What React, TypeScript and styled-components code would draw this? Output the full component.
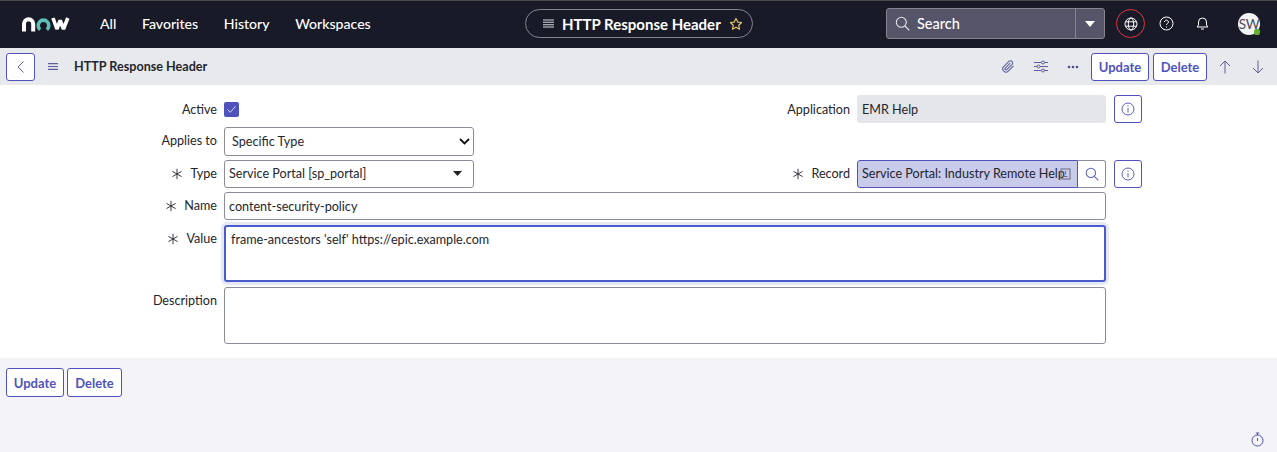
import React from "react";
import styled, { createGlobalStyle } from "styled-components";

const Global = createGlobalStyle`
  html, body { margin: 0; padding: 0; background: #f4f4f8; }
  * { box-sizing: border-box; }
  body { font-family: Lato, "Liberation Sans", sans-serif; color: #24262e; }
`;

const Page = styled.div`
  width: 1277px;
  height: 452px;
  overflow: hidden;
  display: flex;
  flex-direction: column;
  position: relative;
`;

const TopBar = styled.header`
  height: 48px;
  background: #191a28;
  border-top: 1px solid #4a4a4c;
  display: flex;
  align-items: center;
  color: #fff;
  flex: none;
`;
const LogoSlot = styled.div`
  width: 100px;
  padding-left: 22px;
  display: flex;
  align-items: center;
  margin-top: -1px;
`;
const NavMenu = styled.nav`
  display: flex;
  gap: 25.6px;
  font-size: 14.1px;
  width: 425px;
  margin-top: -2px;
`;
const NavItem = styled.span`
  color: #fff;
  font-weight: 500;
`;
const Pill = styled.div`
  width: 228px;
  height: 29px;
  border: 1px solid #85858f;
  border-radius: 15px;
  display: flex;
  align-items: center;
  padding-left: 17px;
  gap: 8px;
  font-weight: 700;
  font-size: 15px;
  margin-top: -2px;
`;
const SearchBox = styled.div`
  margin-left: 133px;
  width: 219px;
  height: 31px;
  background: #555469;
  border: 1px solid #85858f;
  border-radius: 3px;
  display: flex;
  align-items: center;
  margin-top: -2px;
`;
const SearchMain = styled.div`
  flex: 1;
  display: flex;
  align-items: center;
  padding-left: 8px;
  gap: 7px;
  font-size: 14.5px;
  font-weight: 500;
  margin-top: -1px;
`;
const SearchCaret = styled.div`
  width: 29px;
  height: 100%;
  border-left: 1px solid #85858f;
  display: flex;
  align-items: center;
  justify-content: center;
`;
const Caret = styled.span`
  width: 0;
  height: 0;
  border-left: 5px solid transparent;
  border-right: 5px solid transparent;
  border-top: 6px solid #fff;
`;
const GlobeRing = styled.div`
  margin-left: 11px;
  width: 29px;
  height: 29px;
  border: 1px solid #e5323c;
  border-radius: 50%;
  display: flex;
  align-items: center;
  justify-content: center;
  margin-top: -2px;
`;
const HeadIcon = styled.div`
  margin-left: ${(p: { $ml: number }) => p.$ml}px;
  display: flex;
  align-items: center;
  margin-top: -2px;
`;
const Avatar = styled.div`
  margin-left: 28px;
  margin-top: -2px;
  width: 22px;
  height: 22px;
  border-radius: 50%;
  background: #f4f4f6;
  color: #4a4b57;
  font-size: 13.5px;
  letter-spacing: -0.5px;
  display: flex;
  align-items: center;
  justify-content: center;
  position: relative;
`;
const Presence = styled.span`
  position: absolute;
  right: 0;
  bottom: 0;
  width: 6px;
  height: 6px;
  border-radius: 2px;
  background: #62b22f;
`;

const Toolbar = styled.div`
  height: 37px;
  background: #e7e9ed;
  display: flex;
  align-items: center;
  padding: 0 6px;
  flex: none;
`;
const OutlineBtn = styled.button`
  height: 28px;
  padding: 0 7px;
  width: ${(p: { $w: number }) => p.$w}px;
  background: #fff;
  border: 1px solid #4f52bd;
  border-radius: 3px;
  color: #4f52bd;
  font: 700 13px Lato, sans-serif;
  display: flex;
  align-items: center;
  justify-content: center;
  flex: none;
`;
const ToolBtn = styled(OutlineBtn)`
  margin-left: ${(p: { $w: number; $ml?: number }) => p.$ml ?? 0}px;
`;
const FootBtn = styled(OutlineBtn)`
  height: 29px;
`;
const ToolIcon = styled.span`
  display: flex;
  align-items: center;
  margin-left: ${(p: { $ml: number }) => p.$ml}px;
  color: #5d5f9c;
`;
const ToolTitle = styled.div`
  margin-left: 16px;
  font-size: 12.6px;
  font-weight: 700;
  color: #24262e;
  margin-top: -1px;
`;
const Spacer = styled.div`
  flex: 1;
`;

const Form = styled.main`
  background: #fff;
  height: 273px;
  padding-top: 10px;
  display: flex;
  flex-direction: column;
  gap: 4px;
  flex: none;
`;
const Row = styled.div`
  display: flex;
  height: ${(p: { $h?: number; $mt?: number }) => p.$h ?? 28.3}px;
  margin-top: ${(p) => p.$mt ?? 0}px;
  flex: none;
`;
const Label = styled.label`
  width: ${(p: { $w: number; $top?: number }) => p.$w}px;
  flex: none;
  display: flex;
  justify-content: flex-end;
  align-items: flex-start;
  gap: 7px;
  padding-top: ${(p) => p.$top ?? 6}px;
  font-size: 12.6px;
  line-height: 16px;
  color: #24262e;
`;
const Star = styled.span`
  display: flex;
  align-items: center;
  height: 16px;
`;
const FieldGap = styled.div`
  width: 7px;
  flex: none;
`;
const CheckCell = styled.div`
  width: 250px;
  flex: none;
  display: flex;
  align-items: center;
`;
const CheckBox = styled.span`
  width: 15px;
  height: 15px;
  background: #4f52bd;
  border-radius: 2px;
  display: flex;
  align-items: center;
  justify-content: center;
`;
const SelectBox = styled.div`
  width: 250px;
  height: 100%;
  flex: none;
  border: 1px solid #8a8c99;
  border-radius: 3px;
  background: #fff;
  display: flex;
  align-items: center;
  justify-content: space-between;
  padding: 0 ${(p: { $pl: number; $pr: number }) => p.$pr}px 0 ${(p) => p.$pl}px;
  font-size: 12.6px;
`;
const ReadOnly = styled.div`
  width: 249px;
  height: 100%;
  flex: none;
  background: #e5e6ea;
  border-radius: 3px;
  display: flex;
  align-items: center;
  padding-left: 5px;
  font-size: 12.6px;
`;
const InfoBtn = styled(OutlineBtn)`
  margin-left: 8px;
  padding: 0;
  height: 100%;
`;
const Reference = styled.div`
  width: 221px;
  height: 100%;
  flex: none;
  background: #c9cbea;
  border: 1px solid #4f52bd;
  border-radius: 3px 0 0 3px;
  display: flex;
  align-items: center;
  padding-left: 4px;
  font-size: 12.6px;
  white-space: nowrap;
  position: relative;
`;
const RefIcon = styled.span`
  position: absolute;
  left: 202px;
  top: 7px;
  display: flex;
`;
const LookupBtn = styled.div`
  width: 28px;
  height: 100%;
  flex: none;
  background: #fff;
  border: 1px solid #8a8c99;
  border-left: none;
  border-radius: 0 3px 3px 0;
  display: flex;
  align-items: center;
  justify-content: center;
`;
const TextInput = styled.div`
  width: 882px;
  height: 100%;
  flex: none;
  border: 1px solid #8a8c99;
  border-radius: 3px;
  background: #fff;
  display: flex;
  align-items: center;
  padding-left: 4px;
  font-size: 12.6px;
`;
const TextArea = styled.div`
  width: 882px;
  height: 100%;
  flex: none;
  border: ${(p: { $focus?: boolean }) => (p.$focus ? "2px solid #4a5bd0" : "1px solid #8a8c99")};
  border-radius: 3px;
  background: #fff;
  padding: ${(p) => (p.$focus ? "4px 5px" : "6px")};
  font-size: 12.6px;
  line-height: 17px;
  box-shadow: ${(p) => (p.$focus ? "0 0 0 3px #e6e8f4" : "none")};
`;

const Footer = styled.footer`
  flex: 1;
  background: #f4f4f8;
  padding: 10px 6px;
  display: flex;
  gap: 3px;
  position: relative;
`;
const Stopwatch = styled.span`
  position: absolute;
  right: 13px;
  bottom: 5px;
  display: flex;
`;

const StarMark = () => (
  <svg width="12" height="12" viewBox="0 0 12 12" fill="none" stroke="#24262e" strokeWidth="0.9">
    <path d="M6 .8v10.4M1.4 3.4l9.2 5.2M1.4 8.6l9.2-5.2" />
  </svg>
);

const Logo = () => (
  <svg width="49" height="15" viewBox="0 0 49 15" fill="none">
    <path d="M2 14.5V6.8a4.6 4.6 0 0 1 9.2 0v7.7" stroke="#fff" strokeWidth="4" />
    <path d="M18.2 12.6a5.3 5.3 0 1 1 6.6 0" stroke="#5fc0b6" strokeWidth="3.6" />
    <path d="M31 1l3.9 11 3.3-8.5 3.3 8.5 4.3-11" stroke="#fff" strokeWidth="3.6" strokeLinejoin="bevel" />
  </svg>
);

const Menu = ({ color = "#5d5f9c" }: { color?: string }) => (
  <svg width="10" height="7" viewBox="0 0 10 7" stroke={color} strokeWidth="1.1">
    <path d="M0 .6h10M0 3.5h10M0 6.4h10" />
  </svg>
);

const Search = ({ color, size = 15 }: { color: string; size?: number }) => (
  <svg width={size} height={size} viewBox="0 0 15 15" fill="none" stroke={color} strokeWidth="1.1">
    <circle cx="6.3" cy="6.3" r="5" />
    <path d="M10 10l4.3 4.3" />
  </svg>
);

const InfoIcon = () => (
  <svg width="14" height="14" viewBox="0 0 14 14" fill="none" stroke="#5b5fc0" strokeWidth="1">
    <circle cx="7" cy="7" r="6" />
    <path d="M7 3.6v1.2M7 6v4.4" />
  </svg>
);

export default function App() {
  return (
    <Page>
      <Global />
      <TopBar>
        <LogoSlot><Logo /></LogoSlot>
        <NavMenu>
          <NavItem>All</NavItem>
          <NavItem>Favorites</NavItem>
          <NavItem>History</NavItem>
          <NavItem>Workspaces</NavItem>
        </NavMenu>
        <Pill>
          <svg width="11" height="9" viewBox="0 0 11 9" stroke="#d8d8de" strokeWidth="1.1">
            <path d="M0 1h11M0 3.3h11M0 5.7h11M0 8h11" />
          </svg>
          HTTP Response Header
          <svg width="14" height="14" viewBox="0 0 24 24" fill="none" stroke="#e8c56f" strokeWidth="2" strokeLinejoin="round">
            <path d="M12 2.5l2.9 6.2 6.8.8-5 4.7 1.3 6.7-6-3.4-6 3.4 1.3-6.7-5-4.7 6.8-.8z" />
          </svg>
        </Pill>
        <SearchBox>
          <SearchMain><Search color="#e6e6ea" />Search</SearchMain>
          <SearchCaret><Caret /></SearchCaret>
        </SearchBox>
        <GlobeRing>
          <svg width="14" height="14" viewBox="0 0 14 14" fill="none" stroke="#fff" strokeWidth="1">
            <circle cx="7" cy="7" r="6" />
            <ellipse cx="7" cy="7" rx="2.7" ry="6" />
            <path d="M1.5 4.8h11M1.5 9.2h11" />
          </svg>
        </GlobeRing>
        <HeadIcon $ml={14}>
          <svg width="15" height="15" viewBox="0 0 15 15" fill="none" stroke="#fff" strokeWidth="1">
            <circle cx="7.5" cy="7.5" r="6.5" />
            <path d="M5.6 6a1.9 1.9 0 1 1 2.9 1.6c-.7.4-1 .8-1 1.5M7.5 10.6v1" />
          </svg>
        </HeadIcon>
        <HeadIcon $ml={21}>
          <svg width="15" height="15" viewBox="0 0 15 15" fill="none" stroke="#fff" strokeWidth="1">
            <path d="M7.5 2a4 4 0 0 1 4 4v3l1.3 2H2.2l1.3-2V6a4 4 0 0 1 4-4z" />
            <path d="M6 13h3" />
          </svg>
        </HeadIcon>
        <Avatar>SW<Presence /></Avatar>
      </TopBar>

      <Toolbar>
        <OutlineBtn $w={29}>
          <svg width="9" height="14" viewBox="0 0 9 14" fill="none" stroke="#5b5fc0" strokeWidth="1">
            <path d="M7.5 1.5L2 7l5.5 5.5" />
          </svg>
        </OutlineBtn>
        <ToolIcon $ml={13}><Menu /></ToolIcon>
        <ToolTitle>HTTP Response Header</ToolTitle>
        <Spacer />
        <ToolIcon $ml={0}>
          <svg width="14" height="15" viewBox="0 0 24 24" fill="none" stroke="#5d5f9c" strokeWidth="1.8">
            <path d="M21.4 11.1l-8.9 8.9a5.5 5.5 0 0 1-7.8-7.8l9.2-9.2a3.7 3.7 0 0 1 5.2 5.2l-9.2 9.2a1.8 1.8 0 0 1-2.6-2.6l8.5-8.5" />
          </svg>
        </ToolIcon>
        <ToolIcon $ml={19}>
          <svg width="14" height="13" viewBox="0 0 14 13" fill="none" stroke="#5d5f9c" strokeWidth="1">
            <path d="M0 2.5h14M0 6.5h14M0 10.5h14" />
            <circle cx="9" cy="2.5" r="1.5" fill="#e7e9ed" />
            <circle cx="4.5" cy="6.5" r="1.5" fill="#e7e9ed" />
            <circle cx="9" cy="10.5" r="1.5" fill="#e7e9ed" />
          </svg>
        </ToolIcon>
        <ToolIcon $ml={19}>
          <svg width="12" height="4" viewBox="0 0 12 4" fill="#4d4f8c">
            <circle cx="2" cy="2" r="1.3" /><circle cx="6" cy="2" r="1.3" /><circle cx="10" cy="2" r="1.3" />
          </svg>
        </ToolIcon>
        <ToolBtn $w={58} $ml={12}>Update</ToolBtn>
        <ToolBtn $w={54} $ml={4}>Delete</ToolBtn>
        <ToolIcon $ml={12}>
          <svg width="12" height="14" viewBox="0 0 12 14" fill="none" stroke="#5d5f9c" strokeWidth="1">
            <path d="M6 13.5V1M1 6l5-5 5 5" />
          </svg>
        </ToolIcon>
        <ToolIcon $ml={21}>
          <svg width="12" height="14" viewBox="0 0 12 14" fill="none" stroke="#5d5f9c" strokeWidth="1">
            <path d="M6 .5V13M1 8l5 5 5-5" />
          </svg>
        </ToolIcon>
        <FieldGap />
      </Toolbar>

      <Form>
        <Row>
          <Label $w={217} $top={7}>Active</Label>
          <FieldGap />
          <CheckCell>
            <CheckBox>
              <svg width="11" height="9" viewBox="0 0 11 9" fill="none" stroke="#d5d6f2" strokeWidth="1">
                <path d="M1.5 4.5l2.8 2.8 5.2-6" />
              </svg>
            </CheckBox>
          </CheckCell>
          <Label $w={376} $top={7}>Application</Label>
          <FieldGap />
          <ReadOnly>EMR Help</ReadOnly>
          <InfoBtn $w={28}><InfoIcon /></InfoBtn>
        </Row>
        <Row>
          <Label $w={217}>Applies to</Label>
          <FieldGap />
          <SelectBox $pl={7} $pr={3}>
            Specific Type
            <svg width="11" height="7" viewBox="0 0 11 7" fill="none" stroke="#111" strokeWidth="1.8">
              <path d="M1 1l4.5 4.5L10 1" />
            </svg>
          </SelectBox>
        </Row>
        <Row>
          <Label $w={217}><Star><StarMark /></Star>Type</Label>
          <FieldGap />
          <SelectBox $pl={4} $pr={11}>
            Service Portal [sp_portal]
            <svg width="9" height="5" viewBox="0 0 9 5" fill="#222"><path d="M0 0h9L4.5 5z" /></svg>
          </SelectBox>
          <Label $w={376}><Star><StarMark /></Star>Record</Label>
          <FieldGap />
          <Reference>
            Service Portal: Industry Remote Help
            <RefIcon>
              <svg width="11" height="12" viewBox="0 0 11 12" fill="none" stroke="#6f7088" strokeWidth="1.1">
                <rect x="1" y="1" width="9" height="10" />
                <path d="M5.5 3v3.5M3.5 8.5h4" />
              </svg>
            </RefIcon>
          </Reference>
          <LookupBtn><Search color="#5b5fc0" size={14} /></LookupBtn>
          <InfoBtn $w={28}><InfoIcon /></InfoBtn>
        </Row>
        <Row>
          <Label $w={217}><Star><StarMark /></Star>Name</Label>
          <FieldGap />
          <TextInput>content-security-policy</TextInput>
        </Row>
        <Row $h={57} $mt={1}>
          <Label $w={217}><Star><StarMark /></Star>Value</Label>
          <FieldGap />
          <TextArea $focus>frame-ancestors 'self' https://epic.example.com</TextArea>
        </Row>
        <Row $h={57} $mt={1}>
          <Label $w={217}>Description</Label>
          <FieldGap />
          <TextArea />
        </Row>
      </Form>

      <Footer>
        <FootBtn $w={58}>Update</FootBtn>
        <FootBtn $w={55}>Delete</FootBtn>
        <Stopwatch>
          <svg width="13" height="15" viewBox="0 0 13 15" fill="none" stroke="#4f52a8" strokeWidth="1">
            <circle cx="6.5" cy="8.5" r="5.5" />
            <path d="M6.5 1v2M4.8 1h3.4M6.5 6v3" />
          </svg>
        </Stopwatch>
      </Footer>
    </Page>
  );
}
